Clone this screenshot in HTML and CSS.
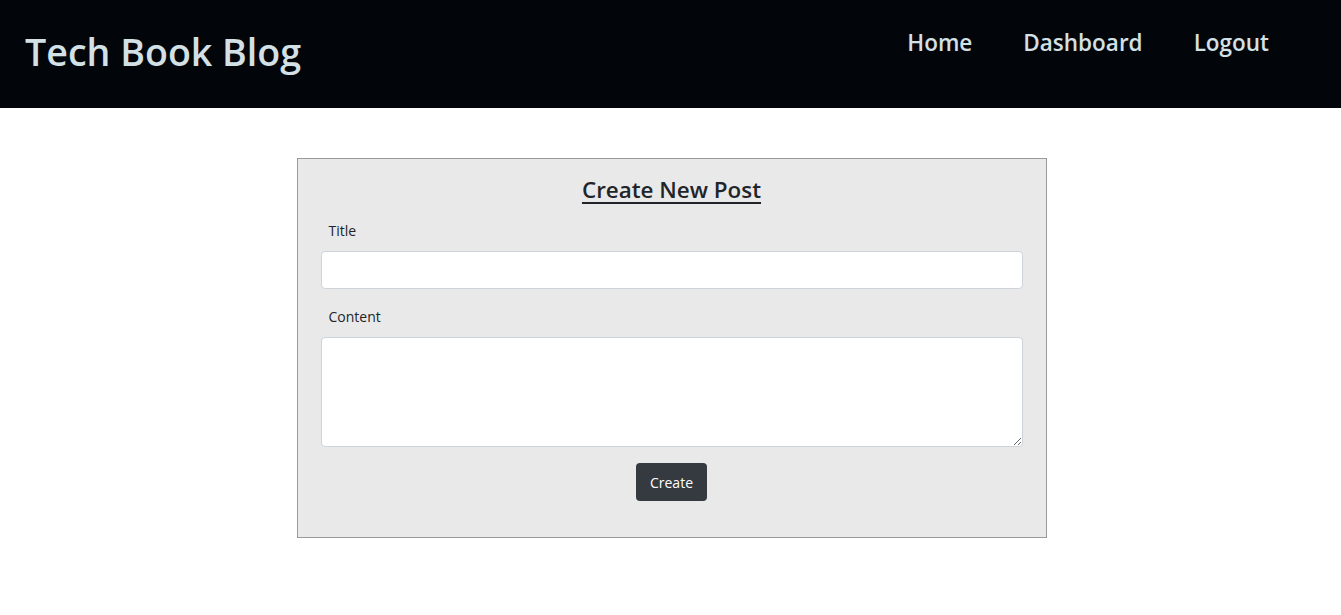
FILE: index.html
```html
<!DOCTYPE html>
<html lang="en">
<head>
<meta charset="utf-8">
<title>Tech Book Blog</title>
<link rel="stylesheet" href="styles.css">
</head>
<body>
<header class="site-header">
  <h1 class="brand">Tech Book Blog</h1>
  <nav class="nav">
    <a href="#" class="nav-link">Home</a>
    <a href="#" class="nav-link">Dashboard</a>
    <a href="#" class="nav-link">Logout</a>
  </nav>
</header>
<main class="main">
  <form class="post-card">
    <h2 class="card-title">Create New Post</h2>
    <label class="field-label" for="title">Title</label>
    <input class="field-input" id="title" type="text">
    <label class="field-label" for="content">Content</label>
    <textarea class="field-textarea" id="content"></textarea>
    <div class="actions">
      <button class="btn" type="button">Create</button>
    </div>
  </form>
</main>
</body>
</html>
```
FILE: styles.css
```css
* { box-sizing: border-box; }
body {
  margin: 0;
  font-family: "Open Sans", "Noto Sans", sans-serif;
  color: #212529;
  background: #fff;
}
.site-header {
  height: 108px;
  background: #020509;
  display: flex;
  justify-content: space-between;
  align-items: flex-start;
  padding: 0 72px 0 25px;
}
.brand {
  margin: 26px 0 0;
  font-size: 37.6px;
  font-weight: 600;
  line-height: 52px;
  color: #d3e0e5;
}
.nav {
  display: flex;
  gap: 51px;
  margin-top: 26px;
}
.nav-link {
  color: #d3e0e5;
  text-decoration: none;
  font-size: 22.5px;
  font-weight: 600;
  line-height: 34px;
}
.main {
  display: flex;
  justify-content: center;
  padding: 50px 0 0 2px;
}
.post-card {
  width: 750px;
  height: 380px;
  background: #e9e9e9;
  border: 1px solid #9a9a9a;
  padding: 16px 23px 0;
  display: flex;
  flex-direction: column;
}
.card-title {
  margin: -1px 0 15px;
  text-align: center;
  font-size: 22.4px;
  font-weight: 600;
  line-height: 32px;
  text-decoration: underline;
  text-decoration-thickness: 2px;
  text-underline-offset: 4px;
}
.field-label {
  font-size: 14px;
  line-height: 20px;
  padding-left: 8px;
  margin-bottom: 10px;
}
.field-input, .field-textarea {
  width: 100%;
  border: 1px solid #ced4da;
  border-radius: 4px;
  background: #fff;
  font: inherit;
}
.field-input { height: 38px; margin-bottom: 18px; }
.field-textarea { height: 110px; resize: vertical; margin-bottom: 16px; }
.actions { display: flex; justify-content: center; }
.btn {
  width: 71px;
  height: 38px;
  background: #343a40;
  color: #fff;
  border: 0;
  border-radius: 4px;
  font-family: inherit;
  font-size: 14px;
}
```
